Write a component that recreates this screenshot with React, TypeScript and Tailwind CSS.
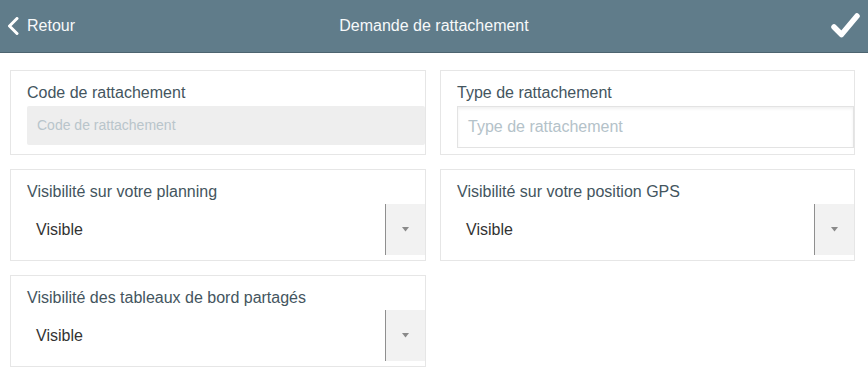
import React from "react";

function Chevron() {
  return (
    <svg width="12" height="18" viewBox="0 0 12 18" className="block">
      <polyline points="10,1.5 2.5,9 10,16.5" fill="none" stroke="#ffffff" strokeWidth="3" strokeLinecap="round" strokeLinejoin="round" />
    </svg>
  );
}

function Check() {
  return (
    <svg width="30" height="26" viewBox="0 0 30 26" className="block">
      <polyline points="3,14 10.5,21.5 26,3" fill="none" stroke="#ffffff" strokeWidth="5.5" strokeLinecap="round" strokeLinejoin="round" />
    </svg>
  );
}

function Label({ children }: { children: React.ReactNode }) {
  return <div className="h-[20px] text-[16px] leading-[20px] text-[#44555e]">{children}</div>;
}

function SelectField({ label }: { label: string }) {
  return (
    <div className="h-[92px] border border-[#e6e6e6] bg-white pl-[16px] pt-[12px]">
      <Label>{label}</Label>
      <div className="mt-[2px] flex h-[51px] items-stretch">
        <div className="flex flex-1 items-center pl-[9px] text-[16px] text-[#333333]">Visible</div>
        <div className="flex w-[40px] items-center justify-center border-l border-[#8f8f8f] bg-[#f2f2f2]">
          <svg width="7" height="5" viewBox="0 0 7 5" className="block">
            <polygon points="0,0 7,0 3.5,4.5" fill="#8a8a8a" />
          </svg>
        </div>
      </div>
    </div>
  );
}

export default function App() {
  return (
    <div className="h-[377px] w-[868px] overflow-hidden bg-white" style={{ fontFamily: '"Liberation Sans", Arial, sans-serif' }}>
      <header className="grid h-[53px] grid-cols-[1fr_auto_1fr] items-center border-b border-[#4d6470] bg-[#607c8a] text-white">
        <div className="flex items-center pl-[7px]">
          <Chevron />
          <span className="ml-[8px] text-[16px] leading-[20px] text-[#f7f9fa]">Retour</span>
        </div>
        <div className="text-center text-[16px] leading-[20px] text-[#f7f9fa]">Demande de rattachement</div>
        <div className="flex justify-end pr-[7px]">
          <Check />
        </div>
      </header>

      <main className="grid grid-cols-[416px_415px] gap-x-[14px] gap-y-[14px] pl-[10px] pt-[17px]">
        <div className="h-[85px] border border-[#e6e6e6] bg-white pl-[16px] pt-[12px]">
          <Label>Code de rattachement</Label>
          <div className="mt-[3px] flex h-[39px] items-center rounded-[2px] bg-[#eeeeee] pl-[10px] text-[14px] text-[#b9c5cb]">
            Code de rattachement
          </div>
        </div>
        <div className="h-[85px] border border-[#e6e6e6] bg-white pl-[16px] pt-[12px]">
          <Label>Type de rattachement</Label>
          <div className="mt-[3px] flex h-[42px] items-center border border-[#e3e3e3] bg-white pl-[10px] text-[16px] text-[#b4c2c9] shadow-[inset_0_2px_3px_rgba(0,0,0,0.06)]">
            Type de rattachement
          </div>
        </div>
        <SelectField label="Visibilité sur votre planning" />
        <SelectField label="Visibilité sur votre position GPS" />
        <SelectField label="Visibilité des tableaux de bord partagés" />
      </main>
    </div>
  );
}
